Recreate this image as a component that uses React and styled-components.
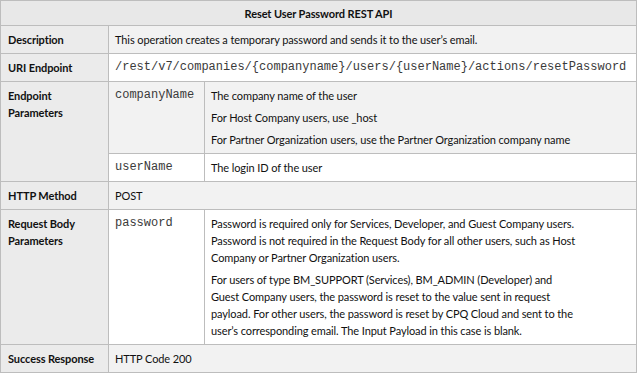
import React from "react";
import styled, { createGlobalStyle } from "styled-components";

const GlobalStyle = createGlobalStyle`
  html, body {
    margin: 0;
    padding: 0;
    background: #ffffff;
  }
`;

const Table = styled.table`
  width: 637px;
  border-collapse: collapse;
  table-layout: fixed;
  font-family: "Lato", "Open Sans", sans-serif;
  font-size: 11px;
  letter-spacing: -0.1px;
  line-height: 17px;
  color: #111111;
`;

const HeadCell = styled.th`
  background: #e8e8e8;
  border: 1px solid #bdbdbd;
  padding: 4px 7px 3px;
  font-weight: 700;
  text-align: center;
`;

const Label = styled.td`
  background: #ebebeb;
  border: 1px solid #bdbdbd;
  padding: 5px 6px 5px 7px;
  font-weight: 700;
  vertical-align: top;
  white-space: nowrap;
`;

const Cell = styled.td`
  background: ${(p) => (p.$shade ? "#f2f2f2" : "#ffffff")};
  border: 1px solid #bdbdbd;
  padding: 5px 6px 5px 6px;
  vertical-align: top;
  font-family: ${(p) =>
    p.$mono ? '"Liberation Mono", "Courier New", monospace' : "inherit"};
  font-size: ${(p) => (p.$mono ? "12px" : "inherit")};
  letter-spacing: ${(p) => (p.$mono ? "0" : "inherit")};
  color: ${(p) => (p.$mono ? "#3a3a3a" : "inherit")};
`;

const Para = styled.p`
  margin: 0;
  & + & {
    margin-top: ${(p) => p.$gap || 5}px;
  }
`;

const App = () => {
  return (
    <>
      <GlobalStyle />
      <Table>
        <colgroup>
          <col style={{ width: 108 }} />
          <col style={{ width: 96 }} />
          <col />
        </colgroup>
        <thead>
          <tr>
            <HeadCell colSpan={3}>Reset User Password REST API</HeadCell>
          </tr>
        </thead>
        <tbody>
          <tr>
            <Label>Description</Label>
            <Cell $shade colSpan={2}>
              This operation creates a temporary password and sends it to the
              user’s email.
            </Cell>
          </tr>
          <tr>
            <Label>URI Endpoint</Label>
            <Cell $mono colSpan={2}>
              /rest/v7/companies/{"{companyname}"}/users/{"{userName}"}/actions/resetPassword
            </Cell>
          </tr>
          <tr>
            <Label rowSpan={2}>
              Endpoint
              <br />
              Parameters
            </Label>
            <Cell $shade $mono>companyName</Cell>
            <Cell $shade>
              <Para $gap={6}>The company name of the user</Para>
              <Para $gap={6}>For Host Company users, use _host</Para>
              <Para $gap={6}>
                For Partner Organization users, use the Partner Organization
                company name
              </Para>
            </Cell>
          </tr>
          <tr>
            <Cell $mono>userName</Cell>
            <Cell>The login ID of the user</Cell>
          </tr>
          <tr>
            <Label>HTTP Method</Label>
            <Cell $shade colSpan={2}>POST</Cell>
          </tr>
          <tr>
            <Label>
              Request Body
              <br />
              Parameters
            </Label>
            <Cell $mono>password</Cell>
            <Cell>
              <Para>
                Password is required only for Services, Developer, and Guest
                Company users.
                <br />
                Password is not required in the Request Body for all other
                users, such as Host
                <br />
                Company or Partner Organization users.
              </Para>
              <Para>
                For users of type BM_SUPPORT (Services), BM_ADMIN (Developer)
                and
                <br />
                Guest Company users, the password is reset to the value sent in
                request
                <br />
                payload. For other users, the password is reset by CPQ Cloud
                and sent to the
                <br />
                user’s corresponding email. The Input Payload in this case is
                blank.
              </Para>
            </Cell>
          </tr>
          <tr>
            <Label>Success Response</Label>
            <Cell $shade colSpan={2}>HTTP Code 200</Cell>
          </tr>
        </tbody>
      </Table>
    </>
  );
};

export default App;
